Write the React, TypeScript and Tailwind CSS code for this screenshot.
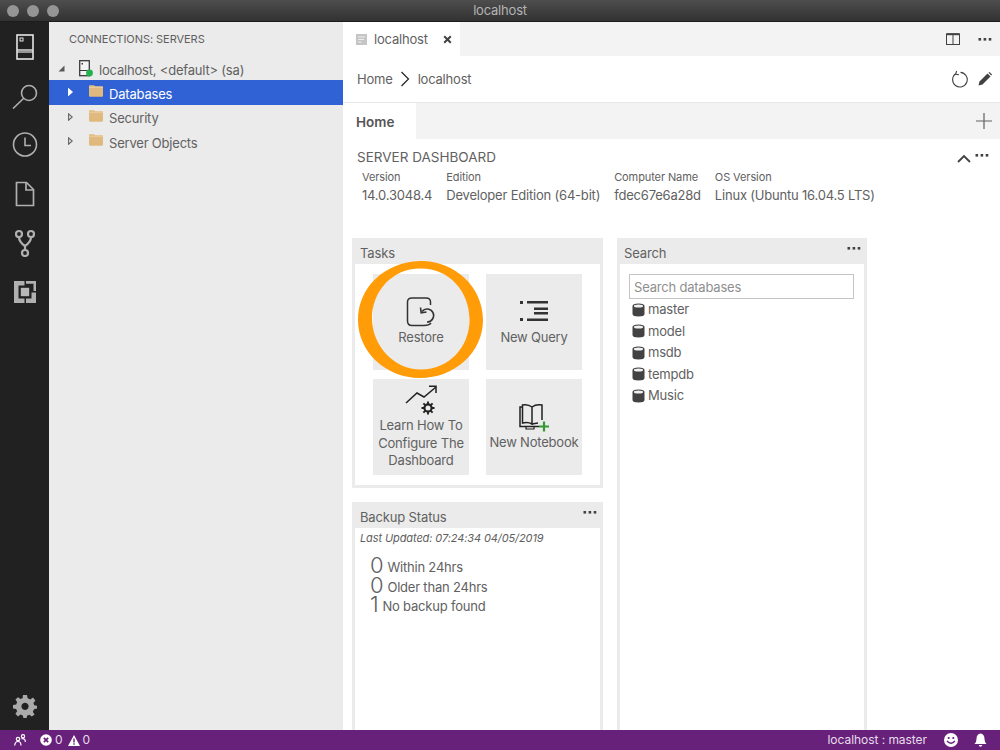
import React from "react";

const font = { fontFamily: "Inter, 'Liberation Sans', sans-serif" };

function ActivityIcon({ children }: { children: React.ReactNode }) {
  return <div className="h-[49px] w-full flex items-center justify-center">{children}</div>;
}

function Dots({ className = "" }: { className?: string }) {
  return (
    <svg width="14" height="4" viewBox="0 0 14 4" className={className}>
      <rect x="0.5" y="1" width="2.6" height="2.6" fill="#424242" />
      <rect x="5.6" y="1" width="2.6" height="2.6" fill="#424242" />
      <rect x="10.7" y="1" width="2.6" height="2.6" fill="#424242" />
    </svg>
  );
}

function Folder() {
  return (
    <svg width="14" height="12" viewBox="0 0 14 12">
      <path d="M0 2 V1 Q0 0.2 1 0.2 H5 L6.2 1.2 H13 Q14 1.2 14 2 V11 Q14 11.8 13 11.8 H1 Q0 11.8 0 11 Z" fill="#e0b97e" />
      <path d="M0 2.2 H14" stroke="#eed4a8" strokeWidth="0.9" />
    </svg>
  );
}

function Caret({ light = false }: { light?: boolean }) {
  return (
    <svg width="5" height="8" viewBox="0 0 5 8">
      <path d="M0.6 0.8 L4.3 4 L0.6 7.2 Z" fill={light ? "#ffffff" : "#e8e8e8"} stroke={light ? "#ffffff" : "#646465"} strokeWidth="1.1" />
    </svg>
  );
}

function TreeRow({ label, selected = false }: { label: string; selected?: boolean }) {
  return (
    <div className={`h-[24.5px] flex items-center pl-[19px] text-[13px] tracking-[-0.2px] ${selected ? "bg-[#3062d6] text-white" : "text-[#616161]"}`}>
      <Caret light={selected} />
      <div className="ml-[16px] mr-[6px] flex items-center mb-[2px]"><Folder /></div>
      <span className="pt-[4px]">{label}</span>
    </div>
  );
}

function Tile({ icon, children, top }: { icon: React.ReactNode; children: React.ReactNode; top: string }) {
  return (
    <div className={`w-[96px] h-[96px] bg-[#ebebeb] flex flex-col items-center text-[13px] leading-[17.5px] tracking-[-0.2px] text-[#616161] text-center ${top}`}>
      {icon}
      {children}
    </div>
  );
}

function DbIcon() {
  return (
    <svg width="13" height="14" viewBox="0 0 13 14" className="shrink-0">
      <path d="M0.5 3 Q0.5 0.5 6.5 0.5 Q12.5 0.5 12.5 3 V11 Q12.5 13.5 6.5 13.5 Q0.5 13.5 0.5 11 Z" fill="#424242" />
      <ellipse cx="6.5" cy="3" rx="4.6" ry="1.5" fill="#f0f0f0" />
    </svg>
  );
}

function PanelHeader({ title, dots = true, inset = "pl-[7px]" }: { title: string; dots?: boolean; inset?: string }) {
  return (
    <div className={`h-[26px] bg-[#ebebeb] flex items-center justify-between ${inset} pr-[6px] text-[13px] tracking-[-0.15px] text-[#616161] shrink-0`}>
      <span className="pt-[5px]">{title}</span>
      {dots && <Dots className="mb-[6px]" />}
    </div>
  );
}

function Prop({ label, value }: { label: string; value: string }) {
  return (
    <div className="flex flex-col">
      <span className="text-[11px] leading-[16px] tracking-[-0.1px] text-[#616161]">{label}</span>
      <span className="text-[13px] leading-[20px] tracking-[-0.2px] text-[#616161]">{value}</span>
    </div>
  );
}

function BackupRow({ n, label }: { n: string; label: string }) {
  return (
    <div className="h-[19.5px] flex items-center gap-[4px] text-[13px] leading-[16px] tracking-[-0.2px] text-[#616161]">
      <span className="text-[22px] font-light leading-[19px]">{n}</span>
      <span className="pt-[3px]">{label}</span>
    </div>
  );
}

export default function App() {
  return (
    <div className="w-[1000px] h-[750px] flex flex-col overflow-hidden bg-white relative" style={font}>
      {/* title bar */}
      <div className="h-[22px] shrink-0 bg-gradient-to-b from-[#4e4e4e] to-[#323232] border-b border-[#1c1c1c] flex items-center relative">
        <div className="flex gap-[8px] pl-[7px] pt-[1px]">
          <span className="w-[12px] h-[12px] rounded-full bg-[#959595]" />
          <span className="w-[12px] h-[12px] rounded-full bg-[#959595]" />
          <span className="w-[12px] h-[12px] rounded-full bg-[#959595]" />
        </div>
        <div className="absolute inset-0 flex items-center justify-center text-[13px] tracking-[-0.2px] text-[#b4b4b4]">localhost</div>
      </div>

      <div className="flex-1 flex min-h-0">
        {/* activity bar */}
        <div className="w-[49px] shrink-0 bg-[#212121] flex flex-col justify-between">
          <div>
            <ActivityIcon>
              <svg width="18" height="26" viewBox="0 0 18 26" fill="none" stroke="#e6e6e6" strokeWidth="1.6">
                <rect x="1" y="1" width="16" height="24" />
                <path d="M1 16 H17" strokeWidth="1.4" />
                <path d="M1 18 H17" strokeWidth="1.2" />
                <rect x="4" y="4" width="3" height="3" strokeWidth="1" />
              </svg>
            </ActivityIcon>
            <ActivityIcon>
              <svg width="26" height="26" viewBox="0 0 26 26" fill="none" stroke="#b0b0b0" strokeWidth="1.6">
                <circle cx="17" cy="10" r="7.5" />
                <path d="M11.5 15.5 L1 25.5" />
              </svg>
            </ActivityIcon>
            <ActivityIcon>
              <svg width="26" height="26" viewBox="0 0 26 26" fill="none" stroke="#b0b0b0" strokeWidth="1.6">
                <circle cx="13" cy="12.5" r="11.5" />
                <path d="M13 5.5 V13.5 H19" />
              </svg>
            </ActivityIcon>
            <ActivityIcon>
              <svg width="20" height="26" viewBox="0 0 20 26" fill="none" stroke="#b0b0b0" strokeWidth="1.7">
                <path d="M1.5 1.5 H11.5 L18.5 8.5 V24.5 H1.5 Z" />
                <path d="M11 1.5 V9 H18.5" />
              </svg>
            </ActivityIcon>
            <ActivityIcon>
              <svg width="20" height="28" viewBox="0 0 20 28" fill="none" stroke="#b0b0b0" strokeWidth="2.2">
                <circle cx="4" cy="5" r="3" />
                <circle cx="16" cy="5" r="3" />
                <circle cx="10" cy="24" r="3" />
                <path d="M4 8 Q4 13 10 17 Q16 13 16 8 M10 17 V21" />
              </svg>
            </ActivityIcon>
            <ActivityIcon>
              <svg width="22" height="22" viewBox="0 0 22 22">
                <rect width="22" height="22" fill="#b0b0b0" />
                <path d="M10.5 0 H12 V2.5 H19.5 V10 H22 V11.5 H17 V5 H10.5 Z" fill="#212121" />
                <rect x="10.5" y="17" width="1.5" height="5" fill="#212121" />
                <rect x="12" y="0" width="10" height="2.5" fill="#b0b0b0" />
                <rect x="4.5" y="4.5" width="13" height="13" fill="#212121" />
                <rect x="6.8" y="6.8" width="8.4" height="8.4" fill="#b8b8b8" />
              </svg>
            </ActivityIcon>
          </div>
          <ActivityIcon>
            <svg width="24" height="24" viewBox="0 0 24 24" fill="#aaaaaa">
              <path fillRule="evenodd" d="M10 1 H14 L14.6 4.2 Q16 4.6 17.2 5.4 L20 3.6 L22.4 6.4 L20.4 9 Q21 10.2 21.2 11.2 L24 11.8 V14.6 L21 15.2 Q20.6 16.6 19.8 17.8 L21.6 20.4 L18.8 22.6 L16.4 20.8 Q15.4 21.4 14.2 21.6 L13.6 24 H10.4 L9.8 21.6 Q8.6 21.2 7.6 20.6 L5 22.4 L2.4 19.8 L4.2 17.2 Q3.6 16.2 3.2 15 L0 14.4 V11 L3.2 10.4 Q3.6 9.2 4.2 8.2 L2.4 5.6 L5 3.2 L7.6 5 Q8.6 4.4 9.6 4.2 Z M12 8.8 A3.6 3.6 0 1 0 12.01 8.8 Z" />
            </svg>
          </ActivityIcon>
        </div>

        {/* sidebar */}
        <div className="w-[294px] shrink-0 bg-[#ebebeb] flex flex-col">
          <div className="h-[35px] flex items-center pl-[20px] text-[11px] tracking-[-0.05px] text-[#5e5e5e]">CONNECTIONS: SERVERS</div>
          <div className="h-[23px] flex items-center pl-[9px] text-[13px] tracking-[-0.2px] text-[#616161]">
            <svg width="7" height="7" viewBox="0 0 7 7"><path d="M6.5 0.5 V6.5 H0.5 Z" fill="#5a5a5a" /></svg>
            <svg width="20" height="18" viewBox="0 0 20 18" className="ml-[14px]">
              <rect x="0.7" y="0.7" width="9.6" height="15" fill="#f4f4f4" stroke="#3a3a3a" strokeWidth="1.3" />
              <path d="M1 10.5 H10" stroke="#3a3a3a" />
              <rect x="2.5" y="3" width="1.5" height="1.5" fill="#3a3a3a" />
              <circle cx="10.5" cy="13" r="3.4" fill="#22b14c" />
            </svg>
            <span className="pt-[4px]">localhost, &lt;default&gt; (sa)</span>
          </div>
          <TreeRow label="Databases" selected />
          <TreeRow label="Security" />
          <TreeRow label="Server Objects" />
        </div>

        {/* main */}
        <div className="flex-1 min-w-0 flex flex-col">
          <div className="h-[34px] shrink-0 bg-[#f3f3f3] flex items-center justify-between pr-[8px]">
            <div className="w-[117px] h-full bg-white flex items-center pl-[13px] text-[13px] tracking-[-0.2px] text-[#616161]">
              <svg width="11" height="11" viewBox="0 0 11 11" className="mr-[7px]">
                <rect width="11" height="11" fill="#c5c5c5" />
                <path d="M2 3 H9 M2 5.5 H8 M2 8 H5.5" stroke="#eeeeee" strokeWidth="1" />
              </svg>
              <span className="pt-[2px]">localhost</span>
              <svg width="9" height="9" viewBox="0 0 9 9" className="ml-[15px]">
                <path d="M1.2 1.2 L7.8 7.8 M7.8 1.2 L1.2 7.8" stroke="#424242" strokeWidth="2" />
              </svg>
            </div>
            <div className="flex items-center gap-[18px]">
              <svg width="14" height="12" viewBox="0 0 14 12" fill="none" stroke="#424242">
                <rect x="0.5" y="1" width="13" height="10.5" />
                <path d="M0.5 1.2 H13.5" strokeWidth="2" />
                <path d="M7 1 V11.5" />
              </svg>
              <Dots />
            </div>
          </div>

          <div className="h-[47px] shrink-0 bg-white border-b border-[#e8e8e8] flex items-center justify-between pl-[14px] pr-[8px] text-[13px] tracking-[-0.2px] text-[#616161]">
            <div className="flex items-center">
              <span className="pt-[1px]">Home</span>
              <svg width="10" height="16" viewBox="0 0 10 16" fill="none" stroke="#222" strokeWidth="1.2" className="ml-[7px] mr-[8px]">
                <path d="M1.5 1 L8.5 8 L1.5 15" />
              </svg>
              <span className="pt-[1px]">localhost</span>
            </div>
            <div className="flex items-center gap-[9px]">
              <svg width="17" height="18" viewBox="0 0 17 18" fill="none" stroke="#424242" strokeWidth="1.1">
                <path d="M3.6 3.8 A7.3 7.3 0 1 0 8.5 2.4" />
                <path d="M4.6 1 L3.6 4.4 L7 4.8" />
              </svg>
              <svg width="14" height="14" viewBox="0 0 14 14" fill="#424242">
                <path d="M0.5 13.5 L1.5 9.5 L9.5 1.5 L12.5 4.5 L4.5 12.5 Z" />
                <path d="M10.5 0.8 L11.5 0 L14 2.5 L13.2 3.5 Z" />
              </svg>
            </div>
          </div>

          <div className="h-[36px] shrink-0 bg-[#f3f3f3] flex items-center justify-between pr-[8px]">
            <div className="w-[73px] h-full bg-white flex items-center pl-[13px] pt-[3px] text-[13.5px] font-semibold text-[#555555]">Home</div>
            <svg width="16" height="16" viewBox="0 0 16 16" stroke="#616161" strokeWidth="1.2"><path d="M8 0 V16 M0 8 H16" /></svg>
          </div>

          {/* dashboard */}
          <div className="flex-1 min-h-0 flex flex-col bg-white relative">
            <div className="h-[99px] shrink-0 pl-[14px] pr-[11px] relative">
              <div className="flex items-start justify-between pt-[9px]">
                <span className="text-[13.5px] leading-[18px] text-[#616161]">SERVER DASHBOARD</span>
                <div className="flex items-center gap-[4px] pt-[2px]">
                  <svg width="14" height="9" viewBox="0 0 14 9" fill="none" stroke="#424242" strokeWidth="1.8" className="mt-[4px]"><path d="M1 8 L7 2 L13 8" /></svg>
                  <Dots className="mb-[4px]" />
                </div>
              </div>
              <div className="flex gap-[14px] pl-[5px] pt-[3px]">
                <Prop label="Version" value="14.0.3048.4" />
                <Prop label="Edition" value="Developer Edition (64-bit)" />
                <Prop label="Computer Name" value="fdec67e6a28d" />
                <Prop label="OS Version" value="Linux (Ubuntu 16.04.5 LTS)" />
              </div>
            </div>

            <div className="flex-1 min-h-0 flex pl-[9px] gap-[14px]">
              <div className="w-[251px] flex flex-col gap-[14px]">
                <div className="h-[250px] border-[3px] border-t-0 border-[#ebebeb] flex flex-col">
                  <div className="-mx-[3px]"><PanelHeader title="Tasks" dots={false} inset="pl-[8px]" /></div>
                  <div className="grid grid-cols-[96px_96px] gap-x-[17px] gap-y-[9px] pl-[18px] pt-[10px]">
                    <Tile top="pt-[23px]" icon={
                      <svg width="30" height="30" viewBox="0 0 30 30" fill="none" stroke="#333" strokeWidth="1.5" className="mb-[2px]">
                        <path d="M24.5 8 V5 Q24.5 1 20 1 H6 Q1.5 1 1.5 5 V24 Q1.5 28.5 6 28.5 H18 Q23 28.5 25 26" />
                        <path d="M16 14.5 A6.5 6.5 0 1 1 21 25" strokeWidth="1.6" />
                        <path d="M14.5 10.5 L15.2 15.8 L20.5 15" strokeWidth="1.6" />
                      </svg>
                    }>Restore</Tile>
                    <Tile top="pt-[23px]" icon={
                      <svg width="30" height="30" viewBox="0 0 30 30" fill="#333" className="mb-[2px]">
                        <rect x="1" y="4" width="3" height="3" />
                        <rect x="1" y="21" width="3" height="3" />
                        <rect x="8" y="4" width="21" height="2.5" />
                        <rect x="15" y="10.5" width="14" height="2.5" />
                        <rect x="15" y="15" width="14" height="2.5" />
                        <rect x="8" y="21.5" width="21" height="2.5" />
                      </svg>
                    }>New Query</Tile>
                    <Tile top="pt-[6px]" icon={
                      <svg width="32" height="30" viewBox="0 0 32 30" fill="none" stroke="#222" strokeWidth="1.5" className="mb-[2px]">
                        <path d="M1 18 L12 8 L19 12 L31 2" />
                        <path d="M24 1.2 H31 V8" />
                        <circle cx="23" cy="23" r="3.6" strokeWidth="2.2" />
                        <path d="M23 16.5 V19 M23 27 V29.5 M16.5 23 H19 M27 23 H29.5 M18.4 18.4 L20.2 20.2 M25.8 25.8 L27.6 27.6 M27.6 18.4 L25.8 20.2 M20.2 25.8 L18.4 27.6" strokeWidth="1.9" />
                      </svg>
                    }>Learn How To Configure The Dashboard</Tile>
                    <Tile top="pt-[25px]" icon={
                      <svg width="30" height="28" viewBox="0 0 30 28" fill="none" stroke="#222" strokeWidth="1.5" className="mb-[2px]">
                        <path d="M3.5 3 H1 V22.5 H20" />
                        <path d="M3.5 1 Q9 0 13 3 V20 Q9 17.5 3.5 19 Z" />
                        <path d="M13 3 Q17 0 23 1 V16 M13 20 L19 19" />
                        <path d="M7 22.5 V25 H15 V22.5" strokeWidth="1.2" />
                        <path d="M25 17.5 V27.5 M20 22.5 H30" stroke="#339933" strokeWidth="2.2" />
                      </svg>
                    }>New Notebook</Tile>
                  </div>
                </div>
                <div className="flex-1 min-h-0 border-[3px] border-y-0 border-[#ebebeb] flex flex-col">
                  <div className="-mx-[3px]"><PanelHeader title="Backup Status" inset="pl-[8px]" /></div>
                  <div className="pl-[5px] pt-[2px] text-[11px] leading-[16px] italic tracking-[-0.1px] text-[#616161]">Last Updated: 07:24:34 04/05/2019</div>
                  <div className="pl-[15px] pt-[10px]">
                    <BackupRow n="0" label="Within 24hrs" />
                    <BackupRow n="0" label="Older than 24hrs" />
                    <BackupRow n="1" label="No backup found" />
                  </div>
                </div>
              </div>

              <div className="w-[250px] border-[3px] border-y-0 border-[#ebebeb] flex flex-col">
                <div className="-mx-[3px]"><PanelHeader title="Search" /></div>
                <div className="pl-[9px] pr-[10px] pt-[10px]">
                  <div className="h-[25px] border border-[#c4c4c4] flex items-center pl-[4px] pt-[2px] text-[13px] tracking-[-0.2px] text-[#8f8f8f]">Search databases</div>
                  <div className="pl-[3px]">
                    {["master", "model", "msdb", "tempdb", "Music"].map((d) => (
                      <div key={d} className="h-[21.5px] flex items-center gap-[3px] text-[13px] tracking-[-0.2px] text-[#616161]">
                        <DbIcon />
                        <span>{d}</span>
                      </div>
                    ))}
                  </div>
                </div>
              </div>
            </div>
          </div>
        </div>
      </div>

      {/* status bar */}
      <div className="h-[20px] shrink-0 bg-[#68217a] flex items-center justify-between pl-[14px] pr-[13px] text-[12px] text-[#e6dcea]">
        <div className="flex items-center">
          <svg width="12" height="12" viewBox="0 0 12 12" fill="none" stroke="#fff" strokeWidth="1.2">
            <circle cx="4" cy="5" r="1.7" />
            <path d="M0.7 11.5 Q1 7.5 4 7.5 Q7 7.5 7 11.5" />
            <circle cx="9" cy="2.2" r="1.6" />
            <path d="M7.5 5 Q9 4.3 10.5 5.2 Q11.3 6 11.3 8" />
          </svg>
          <svg width="12" height="12" viewBox="0 0 12 12" className="ml-[14px] mr-[3px]">
            <circle cx="6" cy="6" r="5.8" fill="#fff" />
            <path d="M3.8 3.8 L8.2 8.2 M8.2 3.8 L3.8 8.2" stroke="#68217a" strokeWidth="1.7" />
          </svg>
          <span>0</span>
          <svg width="12" height="11" viewBox="0 0 12 11" className="ml-[5px] mr-[3px]">
            <path d="M6 0 L12 11 H0 Z" fill="#fff" />
            <path d="M6 3.5 V7.5 M6 8.3 V9.8" stroke="#68217a" strokeWidth="1.4" />
          </svg>
          <span>0</span>
        </div>
        <div className="flex items-center">
          <span className="tracking-[-0.05px]">localhost : master</span>
          <svg width="14" height="14" viewBox="0 0 14 14" className="ml-[17px]">
            <circle cx="7" cy="7" r="7" fill="#fff" />
            <circle cx="4.7" cy="5" r="1.1" fill="#68217a" />
            <circle cx="9.3" cy="5" r="1.1" fill="#68217a" />
            <path d="M3 8 Q7 12.5 11 8" fill="none" stroke="#68217a" strokeWidth="1.3" />
          </svg>
          <svg width="13" height="14" viewBox="0 0 13 14" className="ml-[16px]">
            <path d="M6.5 0.5 Q10.5 1 10.5 6 Q10.5 9 12.5 11 H0.5 Q2.5 9 2.5 6 Q2.5 1 6.5 0.5 Z" fill="#fff" />
            <path d="M4.7 12 H8.3 Q8 13.8 6.5 13.8 Q5 13.8 4.7 12 Z" fill="#fff" />
          </svg>
        </div>
      </div>

      {/* hand-drawn highlight ring over the Restore tile */}
      <svg width="130" height="122" viewBox="358 261 130 122" className="absolute left-[358px] top-[261px] pointer-events-none blur-[0.4px]">
        <path
          fillRule="evenodd"
          fill="#ff9c08"
          d="M420 261 C452 260 483 285 483 320 C483 352 455 378 420 378 C386 378 358 352 358 320 C358 288 384 262 420 261 Z M421 268.5 C392 268 372 292 372 318 C372 346 394 369.5 421 369.5 C449 369.5 469.5 347 469.5 320 C469.5 291 449 268.5 421 268.5 Z"
        />
      </svg>
    </div>
  );
}
